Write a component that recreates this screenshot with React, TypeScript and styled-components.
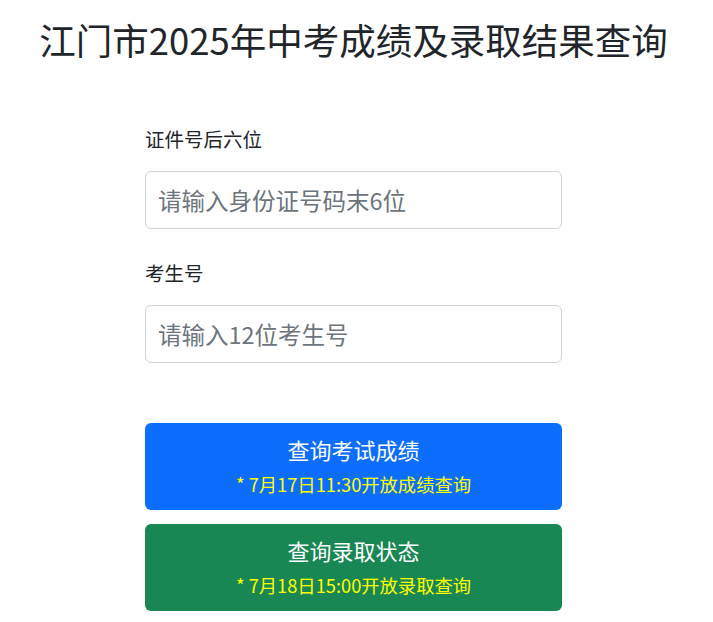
import React from "react";
import styled, { createGlobalStyle } from "styled-components";

const Global = createGlobalStyle`
  html, body { margin: 0; padding: 0; background: #fff; }
  body {
    font-family: "Noto Sans CJK SC", "Noto Sans", sans-serif;
    color: #212529;
  }
  * { box-sizing: border-box; }
`;

const Page = styled.div`
  width: 707px;
  padding-top: 16px;
`;

const Title = styled.h1`
  margin: 0;
  text-align: center;
  font-size: 36.5px;
  line-height: 48px;
  font-weight: 400;
  color: #212529;
`;

const Form = styled.form`
  width: 417px;
  margin: 60px auto 0;
  display: flex;
  flex-direction: column;
`;

const Field = styled.div`
  display: flex;
  flex-direction: column;
  gap: 18px;
  margin-bottom: 29px;
`;

const Label = styled.label`
  font-size: 19.5px;
  line-height: 29px;
  color: #212529;
`;

const Input = styled.input`
  width: 100%;
  height: 58px;
  padding: 0 12px;
  border: 1px solid #ced4da;
  border-radius: 6px;
  font-family: inherit;
  font-size: 23.5px;
  color: #212529;
  background: #fff;
  outline: none;
  &::placeholder { color: #6c757d; }
`;

const Buttons = styled.div`
  display: flex;
  flex-direction: column;
  gap: 14px;
  margin-top: 31px;
`;

const Btn = styled.button<{ $bg: string }>`
  height: 87px;
  width: 100%;
  border: none;
  border-radius: 6px;
  background: ${(p) => p.$bg};
  display: flex;
  flex-direction: column;
  align-items: center;
  justify-content: center;
  gap: 5px;
  padding: 0 0 3px;
  font-family: inherit;
  cursor: pointer;
`;

const BtnTitle = styled.span`
  color: #fff;
  font-size: 22px;
  line-height: 33px;
`;

const BtnNote = styled.span`
  color: #ffff00;
  font-size: 18.3px;
  line-height: 27px;
`;

export default function App() {
  return (
    <Page>
      <Global />
      <Title>江门市2025年中考成绩及录取结果查询</Title>
      <Form onSubmit={(e) => e.preventDefault()}>
        <Field>
          <Label>证件号后六位</Label>
          <Input placeholder="请输入身份证号码末6位" />
        </Field>
        <Field>
          <Label>考生号</Label>
          <Input placeholder="请输入12位考生号" />
        </Field>
        <Buttons>
          <Btn type="button" $bg="#0d6efd">
            <BtnTitle>查询考试成绩</BtnTitle>
            <BtnNote>* 7月17日11:30开放成绩查询</BtnNote>
          </Btn>
          <Btn type="button" $bg="#198754">
            <BtnTitle>查询录取状态</BtnTitle>
            <BtnNote>* 7月18日15:00开放录取查询</BtnNote>
          </Btn>
        </Buttons>
      </Form>
    </Page>
  );
}
